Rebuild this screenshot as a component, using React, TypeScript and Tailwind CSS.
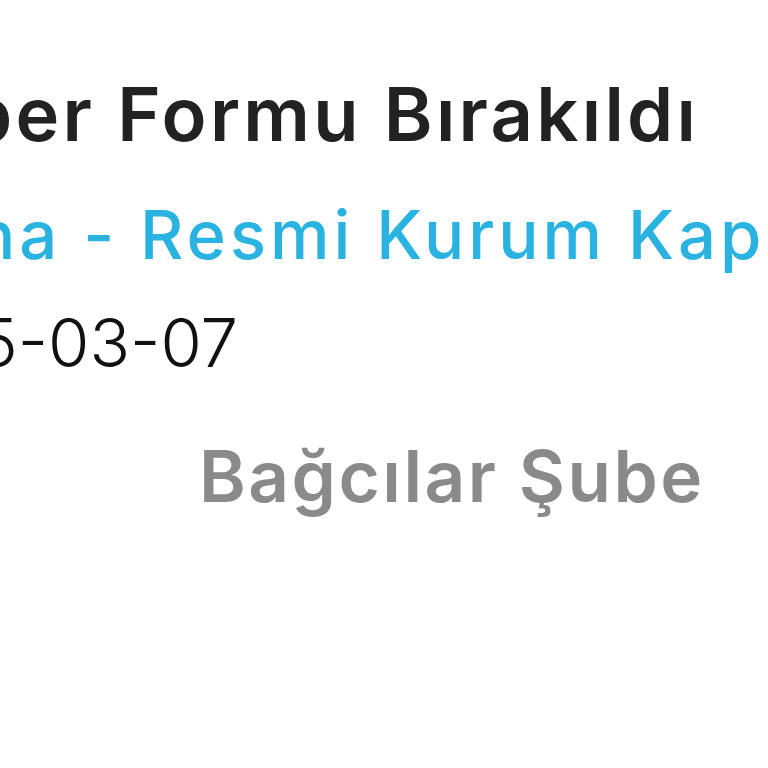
export default function App() {
  return (
    <div className="w-[768px] h-[768px] overflow-hidden bg-white font-['Inter',sans-serif]">
      <div className="flex flex-col pt-[77px]">
        <div className="ml-[-34px] whitespace-nowrap text-[74px] leading-none font-semibold tracking-[3.3px] text-[#222222]">
          ber Formu Bırakıldı
        </div>
        <div className="ml-[-25px] mt-[50px] whitespace-nowrap text-[67px] leading-none font-medium tracking-[4px] text-[#2ab3e0]">
          na - Resmi Kurum Kapısı
        </div>
        <div className="ml-[-22px] mt-[41px] whitespace-nowrap text-[67px] leading-none font-light text-[#111111]">
          5-03-07
        </div>
        <div className="ml-[199px] mt-[65px] whitespace-nowrap text-[71px] leading-none font-semibold tracking-[2.5px] text-[#8a8a8a]">
          Bağcılar Şube
        </div>
      </div>
    </div>
  )
}
